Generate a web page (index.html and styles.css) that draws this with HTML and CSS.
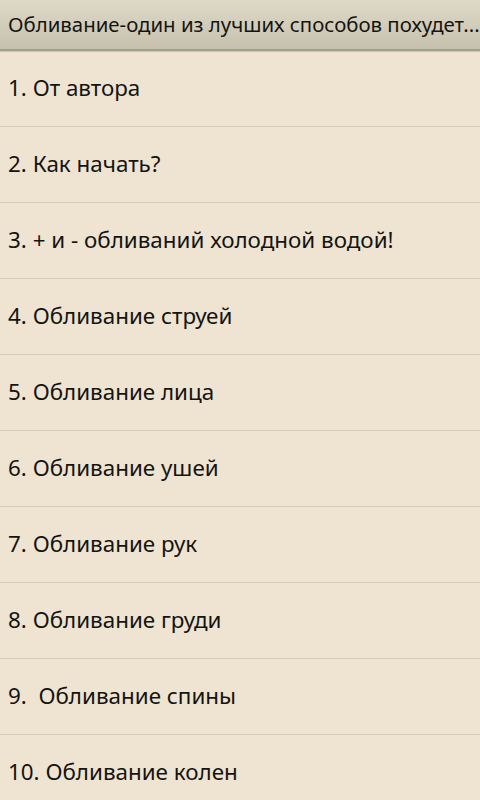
FILE: index.html
```html
<!DOCTYPE html>
<html lang="ru">
<head>
<meta charset="utf-8">
<title>Обливание</title>
<link rel="stylesheet" href="styles.css">
</head>
<body>
<div class="app">
  <header class="titlebar">
    <span class="title">Обливание-один из лучших способов похудет...</span>
  </header>
  <ul class="list">
    <li class="item">1. От автора</li>
    <li class="item">2. Как начать?</li>
    <li class="item">3. + и - обливаний холодной водой!</li>
    <li class="item">4. Обливание струей</li>
    <li class="item">5. Обливание лица</li>
    <li class="item">6. Обливание ушей</li>
    <li class="item">7. Обливание рук</li>
    <li class="item">8. Обливание груди</li>
    <li class="item">9.&nbsp; Обливание спины</li>
    <li class="item">10. Обливание колен</li>
  </ul>
</div>
</body>
</html>
```
FILE: styles.css
```css
html, body {
  margin: 0;
  padding: 0;
  background: #efe4d2;
}
body {
  font-family: "Noto Sans", "Open Sans", "DejaVu Sans", sans-serif;
  color: #141410;
  width: 480px;
  height: 800px;
  overflow: hidden;
}
.app {
  display: flex;
  flex-direction: column;
}
.titlebar {
  height: 49px;
  display: flex;
  align-items: center;
  padding: 0 0 1px 8px;
  box-sizing: border-box;
  height: 51px;
  background: linear-gradient(#dfdac8, #c6c1ad);
  border-bottom: 2px solid #a39e8a;
  box-shadow: 0 1px 1px rgba(0,0,0,0.12);
}
.title {
  font-size: 20.4px;
  white-space: nowrap;
  color: #151510;
}
.list {
  list-style: none;
  margin: 0;
  padding: 0;
}
.item {
  box-sizing: border-box;
  height: 76px;
  border-bottom: 1px solid #d6cbb9;
  display: flex;
  align-items: center;
  padding: 0 0 3px 8px;
  font-size: 22.4px;
  white-space: pre;
}
```
